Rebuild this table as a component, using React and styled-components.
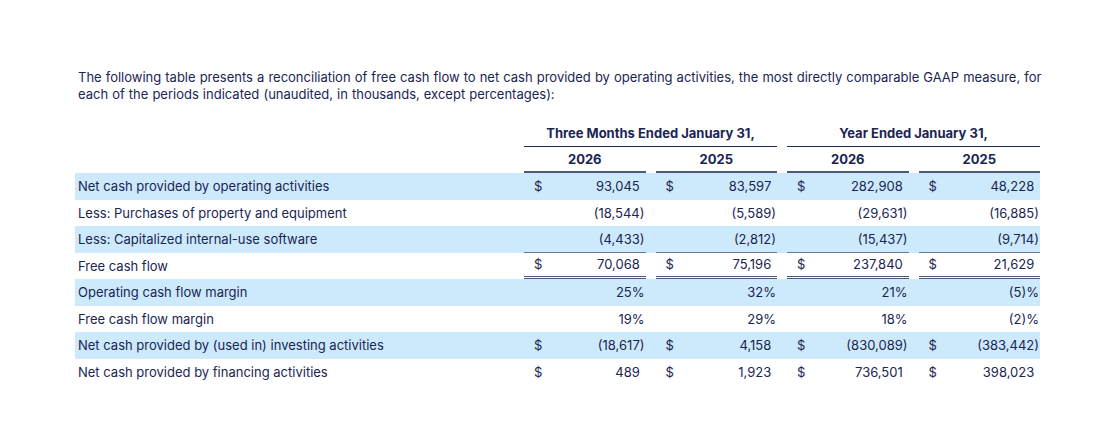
import styled, { createGlobalStyle } from "styled-components";

const GlobalStyle = createGlobalStyle`
  body {
    margin: 0;
    background: #ffffff;
    font-family: Inter, "Noto Sans", sans-serif;
    color: #1a2552;
  }
`;

const rows = [
  {
    label: "Net cash provided by operating activities",
    shaded: true,
    dollar: true,
    values: ["93,045", "83,597", "282,908", "48,228"],
  },
  {
    label: "Less: Purchases of property and equipment",
    values: ["(18,544)", "(5,589)", "(29,631)", "(16,885)"],
  },
  {
    label: "Less: Capitalized internal-use software",
    shaded: true,
    rule: "single",
    values: ["(4,433)", "(2,812)", "(15,437)", "(9,714)"],
  },
  {
    label: "Free cash flow",
    dollar: true,
    rule: "double",
    values: ["70,068", "75,196", "237,840", "21,629"],
  },
  {
    label: "Operating cash flow margin",
    shaded: true,
    percent: true,
    values: ["25%", "32%", "21%", "(5)%"],
  },
  {
    label: "Free cash flow margin",
    percent: true,
    values: ["19%", "29%", "18%", "(2)%"],
  },
  {
    label: "Net cash provided by (used in) investing activities",
    shaded: true,
    dollar: true,
    values: ["(18,617)", "4,158", "(830,089)", "(383,442)"],
  },
  {
    label: "Net cash provided by financing activities",
    dollar: true,
    values: ["489", "1,923", "736,501", "398,023"],
  },
];

export default function App() {
  return (
    <>
      <GlobalStyle />
      <Page>
        <Intro>
          The following table presents a reconciliation of free cash flow to net
          cash provided by operating activities, the most directly comparable
          GAAP measure, for each of the periods indicated (unaudited, in
          thousands, except percentages):
        </Intro>

        <Table>
          <Row>
            <span />
            <GroupHead>Three Months Ended January 31,</GroupHead>
            <GroupHead>Year Ended January 31,</GroupHead>
          </Row>
          <Row>
            <span />
            <YearHead>2026</YearHead>
            <YearHead>2025</YearHead>
            <YearHead>2026</YearHead>
            <YearHead>2025</YearHead>
          </Row>

          {rows.map((row) => (
            <Row key={row.label} $shaded={row.shaded}>
              <Label>{row.label}</Label>
              {row.values.map((value, i) => {
                const closes = value.endsWith(")") || row.percent;
                return (
                  <Value key={i} $rule={row.rule}>
                    <Dollar>{row.dollar ? "$" : ""}</Dollar>
                    <Amount>
                      {value}
                      {!closes && <Ghost>)</Ghost>}
                    </Amount>
                  </Value>
                );
              })}
            </Row>
          ))}
        </Table>
      </Page>
    </>
  );
}

const Page = styled.main`
  padding: 69px 0 0 75px;
  width: 965px;
`;

const Intro = styled.p`
  width: 975px;
  margin: 0 0 17px;
  padding-left: 3px;
  font-size: 13px;
  line-height: 17px;
  word-spacing: 0.4px;
  color: #1a2552;
`;

const Table = styled.div`
  display: grid;
`;

const Row = styled.div`
  display: grid;
  grid-template-columns: 439px repeat(4, 1fr);
  column-gap: 10px;
  height: 26.5px;
  background: ${(p) => (p.$shaded ? "#cdeafc" : "transparent")};
  font-size: 13px;
`;

const GroupHead = styled.div`
  grid-column: span 2;
  display: flex;
  align-items: center;
  justify-content: center;
  font-weight: 700;
  border-bottom: 1px solid #1f2b57;
  box-sizing: border-box;
`;

const YearHead = styled.div`
  display: flex;
  align-items: center;
  justify-content: center;
  font-weight: 700;
  border-bottom: 2px solid #4e587a;
  box-sizing: border-box;
`;

const Label = styled.div`
  display: flex;
  align-items: center;
  padding-left: 3px;
`;

const Value = styled.div`
  display: flex;
  align-items: center;
  justify-content: space-between;
  padding: 0 1px 0 10px;
  box-sizing: border-box;
  border-bottom: ${(p) =>
    p.$rule === "double"
      ? "3px double #4e587a"
      : p.$rule === "single"
        ? "1px solid #6b7491"
        : "0"};
`;

const Dollar = styled.span``;

const Amount = styled.span`
  white-space: nowrap;
`;

const Ghost = styled.span`
  visibility: hidden;
`;
